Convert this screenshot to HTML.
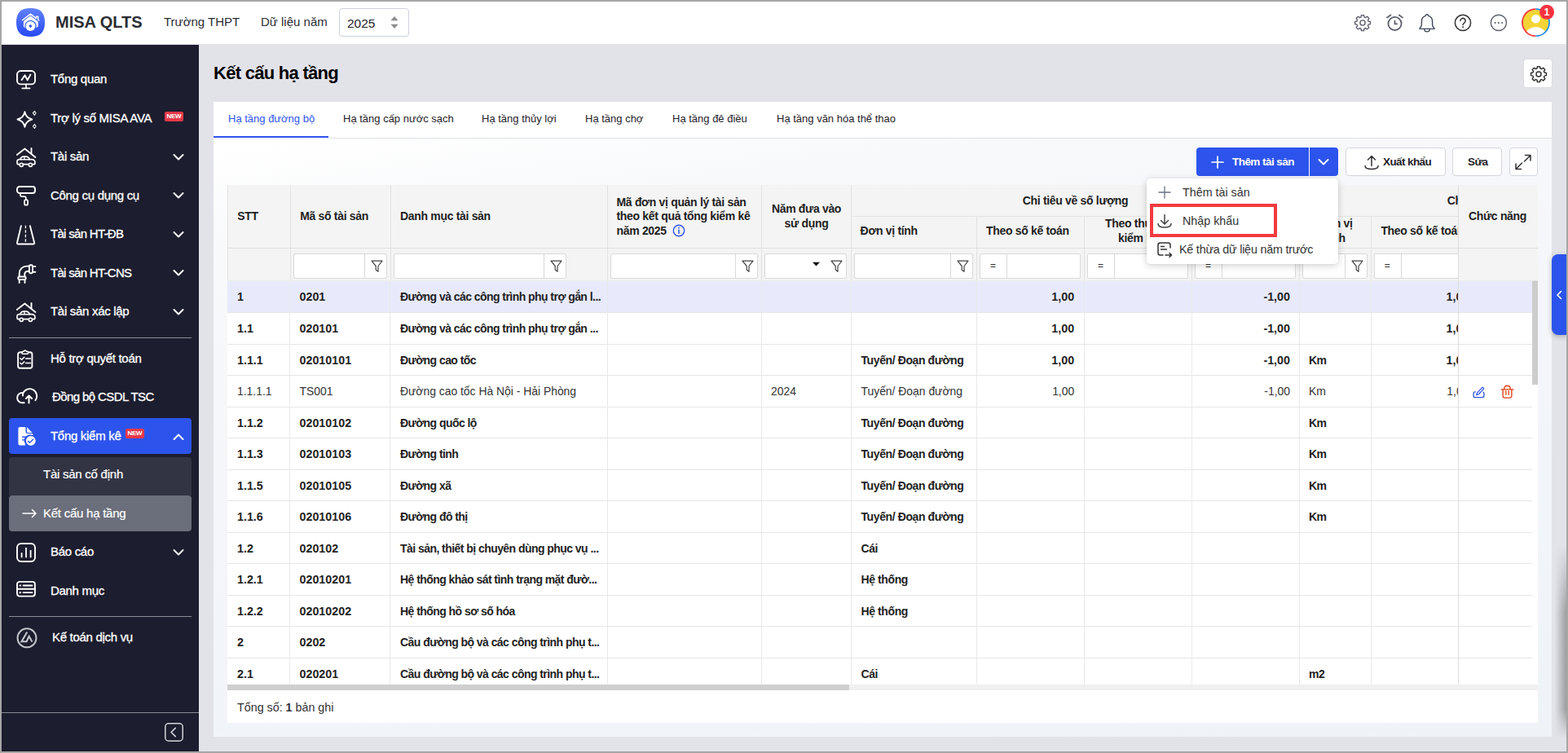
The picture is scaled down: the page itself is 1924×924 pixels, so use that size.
<!DOCTYPE html>
<html lang="vi">
<head>
<meta charset="utf-8">
<title>MISA QLTS - Kết cấu hạ tầng</title>
<style>
*{box-sizing:border-box;margin:0;padding:0}
html,body{width:1924px;height:924px;overflow:hidden}
body{background:#a6a6a6;font-family:"Liberation Sans",sans-serif;color:#1f2229;position:relative}
#app{position:absolute;left:2px;top:2px;width:1920px;height:920px;background:#e2e3e9;overflow:hidden}
/* header */
#hdr{position:absolute;left:0;top:0;width:1920px;height:52px;background:#fff}
#hdr .brand{position:absolute;left:66px;top:13px;font-size:20px;font-weight:700;color:#2b2d33;line-height:24px;white-space:nowrap}
#hdr .t{position:absolute;top:15px;font-size:15px;line-height:20px;color:#2b2d33;white-space:nowrap}
#year{position:absolute;left:414px;top:8px;width:86px;height:35px;border:1px solid #ced2dc;border-radius:4px;background:#fff}
#year span{position:absolute;left:9px;top:8px;font-size:15.500px;line-height:20px;color:#1f2229}
#hdr svg{position:absolute}
/* sidebar */
#side{position:absolute;left:0;top:53px;width:242px;height:867px;background:#1c1d2e}
.mi{position:absolute;left:0;width:242px;height:44px}
.mi .tx{position:absolute;left:60px;top:12.800px;font-size:15px;line-height:20px;color:#fff;white-space:nowrap;letter-spacing:-0.300px;-webkit-text-stroke:0.300px #fff}
.mi svg.ic{position:absolute;left:18px;top:10px;width:24px;height:24px;overflow:visible}
.mi svg.chev{position:absolute;left:210px;top:18px;width:14px;height:10px}
.sep{position:absolute;left:9px;width:224px;height:1px;background:#8a8c98}
.new{position:absolute;background:#e8394a;color:#fff;font-size:8px;font-weight:700;border-radius:2px;line-height:12px;height:12px;text-align:center;letter-spacing:-0.300px}
.mi.act{left:9px;width:224px;background:#2c54ec;border-radius:4px}
.mi.act svg.ic{left:9px}
.mi.act .tx{left:51px}
.mi.act svg.chev{left:201px}
.sub{position:absolute;left:9px;width:224px;height:44px;background:#323444;border-radius:4px}
.sub.on{background:#6b6e7b}
.sub span{position:absolute;left:42px;top:12px;font-size:15px;line-height:20px;color:#fff;white-space:nowrap;letter-spacing:-0.250px;-webkit-text-stroke:0.200px #fff}
#collapse{position:absolute;left:200px;top:832px;width:23px;height:23px}
#collapse svg{width:23px;height:23px}
/* main */
#title{position:absolute;left:260px;top:72.600px;font-size:22px;font-weight:700;line-height:30px;color:#000;white-space:nowrap;letter-spacing:-0.720px}
#gear{position:absolute;left:1867px;top:70px;width:36px;height:36px;background:#fff;border-radius:4px;border:1px solid #dcdde2}
#card{position:absolute;left:260px;top:123px;width:1642px;height:779px;background:linear-gradient(172deg,#fff 6%,#f8f9fb 18%,#f4f6fa 45%,#eff3f7 100%)}
#tabs{position:absolute;left:0;top:0;width:1642px;height:45px;background:#fff}
#tabs:after{content:"";position:absolute;left:141px;top:44px;width:1501px;height:1px;background:#dfe1e6}
.tab{position:absolute;top:12px;font-size:13px;line-height:18px;color:#1f2229;white-space:nowrap}
.tab.on{color:#2f54eb}
#tabline{position:absolute;left:0;top:42px;width:141px;height:2px;background:#2f54eb}
/* toolbar */
.btn{position:absolute;top:179px;height:35px;border:1px solid #d3d6de;border-radius:4px;background:#fff;font-size:13.500px;color:#1f2229;white-space:nowrap}
.btn span{position:absolute;top:8px;line-height:18px;font-weight:700;letter-spacing:-0.600px}
/* grid */
#grid{position:absolute;left:277px;top:225px;width:1608px;height:660px;background:#fff;overflow:hidden}
#ghead{position:absolute;left:0;top:0;width:1608px;height:118px;background:#f4f4f4}
.vl{position:absolute;width:1px;background:#e2e2e2}
.vl.bl{background:#e9e9e9}
.hl{position:absolute;height:1px;background:#e4e4e4}
.th{position:absolute;font-size:14px;letter-spacing:-0.320px;font-weight:700;line-height:17.500px;color:#1f1f1f;white-space:nowrap}
.fi{position:absolute;top:84px;height:31px;background:#fff;border:1px solid #d9d9d9;border-radius:2px}
.fi i{position:absolute;top:0;width:1px;height:29px;background:#d9d9d9}
.fi svg{position:absolute}
.fi svg.fn{right:4px;top:7px;width:15px;height:16px}
.fi b{position:absolute;top:6px;font-size:12px;font-weight:400;color:#333;line-height:16px}
.row{position:absolute;left:0;width:1608px;height:39px}
.c{position:absolute;top:0;height:38px;line-height:38px;font-size:14.300px;font-weight:700;color:#1f1f1f;white-space:nowrap}
.c.t{font-size:14px;letter-spacing:-0.550px}
.c.u{letter-spacing:-0.400px}
.r .c{font-weight:400;color:#333;font-size:13.900px;letter-spacing:0}
.c.n{text-align:right}

#addbtn{position:absolute;left:1466px;top:179px;width:174px;height:35px;background:#2c54ec;border-radius:4px;color:#fff;letter-spacing:-0.550px;font-size:13.500px;font-weight:700;white-space:nowrap}
#addbtn svg{position:absolute}
#addbtn span{position:absolute;top:8.700px;line-height:18px}
#addbtn i{position:absolute;left:138px;top:0;width:1px;height:35px;background:#fff}
.row{border-top:1px solid #e6e6e6}
.row.sel{border-top-color:#ebebeb}
.row.sel{background:#e8eafc}
#fix{position:absolute;top:0;width:98px;height:614px;background:#fff;border-left:1px solid #dcdcdc}
#fix .fh{position:absolute;left:0;top:0;width:98px;height:118px;background:#f4f4f4;border-bottom:1px solid #e2e2e2}
#fix .fh:after{content:"";position:absolute;left:0;top:77px;width:98px;height:1px;background:#dedede}
#fix .fr{position:absolute;left:0;width:90px;height:39px;border-top:1px solid #e6e6e6}
#fix .fr.sel{background:#e8eafc;border-top-color:#ebebeb}
#vthumb{position:absolute;width:7px;height:127px;background:#cdcdcd}
#hs{position:absolute;left:0;top:613px;width:1608px;height:7px;background:#f0f0f0}
#hs div{position:absolute;left:0;top:0;width:763px;height:7px;background:#cfcfcf}
#foot{position:absolute;left:12px;top:631px;font-size:14.300px;line-height:20px;color:#333;white-space:nowrap}
#dd{position:absolute;left:1405px;top:217px;width:235px;height:105px;background:#fff;border-radius:5px;box-shadow:0 2px 10px rgba(0,0,0,.18),0 0 2px rgba(0,0,0,.08)}
#dd svg{position:absolute}
#dd span{position:absolute;font-size:14.300px;line-height:20px;color:#333;white-space:nowrap}
#red{position:absolute;left:4px;top:31px;width:156px;height:41px;border:4px solid #f23b40}
#stab{position:absolute;left:1902px;top:310px;width:18px;height:99px;background:#2c54ec;border-radius:8px 0 0 8px;box-shadow:0 2px 6px rgba(0,0,0,.25)}
#rshadow{position:absolute;left:1906px;top:668px;width:14px;height:236px;background:linear-gradient(90deg,rgba(120,120,120,0),rgba(120,120,120,.65));-webkit-mask-image:linear-gradient(180deg,transparent,#000 35%,#000 85%,transparent);mask-image:linear-gradient(180deg,transparent,#000 35%,#000 85%,transparent)}
</style>
</head>
<body>
<div id="app">
<div id="hdr">
  <svg style="left:18px;top:8px;width:35px;height:35px" viewBox="0 0 35 35">
    <defs><linearGradient id="lg" x1="0" y1="0" x2="0" y2="1"><stop offset="0" stop-color="#6181ff"/><stop offset="1" stop-color="#2749f3"/></linearGradient></defs>
    <path d="M17.500 0C29.500 0 35 5.500 35 17.500S29.500 35 17.500 35 0 29.500 0 17.500 5.500 0 17.500 0z" fill="url(#lg)"/>
    <path d="M7.400 14.700L17.400 7.100l7.200 5.500v-2.300h2.100v3.900l1.100.8" stroke="#fff" stroke-width="1.400" fill="none" stroke-linejoin="round" stroke-linecap="round"/>
    <path d="M8.900 15.800L17.400 9.300l9.300 7.100v6.300l-2.300 1.400a7.200 7.200 0 1 0-13.600 .5L8.900 22.800z" fill="#fff"/>
    <circle cx="17.400" cy="22" r="6" fill="#fff"/>
    <path d="M17.400 19.800l2.100 2.200-2.100 2.200-2.100-2.200z" fill="#3355f6"/>
  </svg>
  <div class="brand">MISA QLTS</div>
  <div class="t" style="left:199px">Trường THPT</div>
  <div class="t" style="left:318px">Dữ liệu năm</div>
  <div id="year"><span>2025</span>
    <svg style="left:62px;top:9.300px;width:10px;height:15px" viewBox="0 0 10 15"><path d="M5 0l4.600 5.200H.4zM5 15L.4 9.800h9.200z" fill="#8e8e8e"/></svg>
  </div>
  <!-- gear -->
  <svg style="left:1659px;top:15px;width:22px;height:22px" viewBox="0 0 24 24"><g fill="none" stroke="#5a5f6b" stroke-width="1.500" stroke-linejoin="round"><circle cx="12" cy="12" r="3.400"/><path d="M10.300 1.800h3.400l.5 2.600 1.700.7 2.200-1.500 2.400 2.400-1.500 2.200.7 1.700 2.600.5v3.400l-2.600.5-.7 1.700 1.500 2.200-2.400 2.400-2.200-1.500-1.700.7-.5 2.600h-3.400l-.5-2.600-1.700-.7-2.200 1.500-2.400-2.400 1.500-2.200-.7-1.700-2.600-.5v-3.400l2.600-.5.7-1.700-1.500-2.200 2.400-2.400 2.200 1.500 1.700-.7z"/></g></svg>
  <!-- clock -->
  <svg style="left:1697px;top:14px;width:25px;height:24px" viewBox="0 0 25 24"><g fill="none" stroke="#5a5f6b" stroke-width="1.800" stroke-linecap="round"><circle cx="12.500" cy="13" r="8.100"/><path d="M12.500 9.600v3.700h2.700M3 5.600l4.400-3.100M17.900 2.500l4 3.100"/></g></svg>
  <!-- bell -->
  <svg style="left:1737px;top:13px;width:24px;height:25px" viewBox="0 0 24 25"><g fill="none" stroke="#3d4657" stroke-width="1.400" stroke-linejoin="round" stroke-linecap="round"><path d="M12 2.800c1 0 1.600.7 1.800 1.600 3 1 4.800 3.600 4.800 7v3.500c0 2 .9 3.600 2.300 4.600v.9H3.100v-.9c1.400-1 2.300-2.600 2.300-4.600v-3.500c0-3.400 1.800-6 4.800-7 .2-.9.800-1.600 1.800-1.600z"/><path d="M8.700 20.600a3.300 3.300 0 0 0 6.600 0"/></g></svg>
  <!-- help -->
  <svg style="left:1781px;top:14px;width:24px;height:24px" viewBox="0 0 24 24"><circle cx="12" cy="11.900" r="9.600" fill="none" stroke="#333" stroke-width="1.500"/><path d="M8.900 9.500a3.100 3.100 0 1 1 4.800 2.600c-1 .7-1.600 1.300-1.600 2.500" fill="none" stroke="#333" stroke-width="1.500" stroke-linecap="round"/><circle cx="12.100" cy="17.300" r="1" fill="#333"/></svg>
  <!-- more -->
  <svg style="left:1825px;top:14px;width:24px;height:24px" viewBox="0 0 24 24"><circle cx="11.900" cy="11.900" r="9.600" fill="none" stroke="#5f6570" stroke-width="1.400"/><circle cx="7.600" cy="12" r="1.100" fill="#5f6570"/><circle cx="11.900" cy="12" r="1.100" fill="#5f6570"/><circle cx="16.200" cy="12" r="1.100" fill="#5f6570"/></svg>
  <!-- avatar -->
  <svg style="left:1864px;top:3px;width:46px;height:42px" viewBox="0 0 46 42">
    <defs><clipPath id="av"><circle cx="18.500" cy="22.600" r="15.600"/></clipPath></defs>
    <path d="M18.500 5.200a17.400 17.400 0 0 0 0 34.800z" fill="#f5333f"/>
    <path d="M18.500 5.200a17.400 17.400 0 0 1 0 34.800z" fill="#1a8cff"/>
    <circle cx="18.500" cy="22.600" r="15.700" fill="#f4d535"/>
    <g clip-path="url(#av)" fill="#fff"><circle cx="18.500" cy="18.200" r="5.400"/><ellipse cx="18.500" cy="38" rx="12.500" ry="10"/></g>
    <circle cx="32.100" cy="9.800" r="9" fill="#f5333f"/>
    <text x="32.100" y="14.300" text-anchor="middle" font-family="Liberation Sans, sans-serif" font-size="12.500" font-weight="700" fill="#fff">1</text>
  </svg>
</div>
<div id="side">
<div class="mi" style="top:19px"><svg class="ic" viewBox="0 0 24 26" style="height:26px"><g stroke="#fff" stroke-width="1.9" fill="none" stroke-linecap="round" stroke-linejoin="round"><rect x="1" y="3" width="22" height="16.4" rx="4.5"/><path d="M12 19.6V24M7.2 24.3h9.4" stroke-width="1.7"/><path d="M6.6 14.1l3.9-5.8 3.2 6 3.7-6.7"/></g></svg><span class="tx">Tổng quan</span></div>
<div class="mi" style="top:67px"><svg class="ic" viewBox="0 0 26 24" style="width:26px;top:12px"><g stroke="#fff" stroke-width="1.9" fill="none" stroke-linecap="round" stroke-linejoin="round" stroke-width="1.7"><path d="M10.4 3.2c1 5.2 3.6 7.9 8.9 9.3-5.3 1.400-7.900 4.100-8.900 9.300-1-5.200-3.600-7.900-8.900-9.300 5.300-1.400 7.900-4.100 8.900-9.300z"/><path d="M22.400 2.300l1.700 2.400-1.700 2.600-2-2.600zM22.400 18.500l1.700 2.500-1.700 2.500-2-2.500z" stroke-width="1.100"/></g></svg><span class="tx">Trợ lý số MISA AVA</span><span class="new" style="left:200px;top:15px;width:23px">NEW</span></div>
<div class="mi" style="top:114.5px"><svg class="ic" viewBox="0 0 24 26" style="height:26px"><g stroke="#fff" stroke-width="1.9" fill="none" stroke-linecap="round" stroke-linejoin="round" stroke-width="1.8"><path d="M0.800 10l9.600-7.600 13 10.500M18.500 2v6.300"/><path d="M4.300 21.700H3a2 2 0 0 1-2-2v-1.500a2.500 2.500 0 0 1 2.500-2.500h1.300c.7-2.300 2.300-3.600 4.500-3.600h2.600c2 0 3.600 1.300 4.600 3.600h2.500c2.300 0 4 1.600 4 3.600v.4a2 2 0 0 1-2 2h-1.300M8.400 21.700h6.400" stroke-width="1.700"/><path d="M5.300 15.700h11M10 12.400v3.300" stroke-width="1.400"/><circle cx="6.300" cy="22.300" r="2.100" stroke-width="1.600"/><circle cx="17.400" cy="22.300" r="2.100" stroke-width="1.600"/></g></svg><span class="tx">Tài sản</span><svg class="chev" viewBox="0 0 14 10"><path d="M1.500 2l5.500 5.500L12.500 2" stroke="#fff" stroke-width="2" fill="none" stroke-linecap="round" stroke-linejoin="round"/></svg></div>
<div class="mi" style="top:162px"><svg class="ic" viewBox="0 0 24 26" style="height:26px"><g stroke="#fff" stroke-width="1.9" fill="none" stroke-linecap="round" stroke-linejoin="round" stroke-width="2"><rect x="1" y="2" width="22" height="8" rx="3"/><path d="M5 10.500v1.800a1.800 1.800 0 0 0 1.800 1.800h3a2 2 0 0 1 2 2v2" stroke-width="1.700"/><rect x="10" y="18.200" width="4.100" height="6.500" rx="2" stroke-width="1.800"/></g></svg><span class="tx">Công cụ dụng cụ</span><svg class="chev" viewBox="0 0 14 10"><path d="M1.500 2l5.500 5.500L12.500 2" stroke="#fff" stroke-width="2" fill="none" stroke-linecap="round" stroke-linejoin="round"/></svg></div>
<div class="mi" style="top:209.5px"><svg class="ic" viewBox="0 0 24 26" style="height:26px"><g stroke="#fff" stroke-width="1.9" fill="none" stroke-linecap="round" stroke-linejoin="round" stroke-width="1.700"><path d="M5.900 2.200L1 22.800a1.300 1.300 0 0 0 1.300 1.700h18.500a1.300 1.300 0 0 0 1.300-1.700L16.900 2.200"/><path d="M11.400 1.800v20" stroke-dasharray="3.500 2" stroke-width="1.300" stroke-linecap="butt"/></g></svg><span class="tx" style="letter-spacing:-0.700px">Tài sản HT-ĐB</span><svg class="chev" viewBox="0 0 14 10"><path d="M1.500 2l5.500 5.500L12.500 2" stroke="#fff" stroke-width="2" fill="none" stroke-linecap="round" stroke-linejoin="round"/></svg></div>
<div class="mi" style="top:257px"><svg class="ic" viewBox="0 0 24 26" style="height:26px"><g stroke="#fff" stroke-width="1.9" fill="none" stroke-linecap="round" stroke-linejoin="round" stroke-width="1.500"><path d="M3.700 17.400v-3.800a9 9 0 0 1 9-9h3M10.300 17.400v-3.200a3.200 3.200 0 0 1 3.200-3.200h2.200"/><rect x="15.900" y="3.300" width="4.100" height="10" rx="1.500"/><path d="M20 5h3.300M20 11.700h3.300"/><rect x="2.200" y="17.500" width="9.500" height="3.500" rx="1.500"/><path d="M3.700 21v4M10.500 21v4"/></g></svg><span class="tx" style="letter-spacing:-0.700px">Tài sản HT-CNS</span><svg class="chev" viewBox="0 0 14 10"><path d="M1.500 2l5.500 5.500L12.500 2" stroke="#fff" stroke-width="2" fill="none" stroke-linecap="round" stroke-linejoin="round"/></svg></div>
<div class="mi" style="top:304.5px"><svg class="ic" viewBox="0 0 24 26" style="height:26px"><g stroke="#fff" stroke-width="1.9" fill="none" stroke-linecap="round" stroke-linejoin="round" stroke-width="1.8"><path d="M0.800 10l9.600-7.600 13 10.500M18.500 2v6.300"/><path d="M4.300 21.700H3a2 2 0 0 1-2-2v-1.500a2.500 2.500 0 0 1 2.500-2.500h1.300c.7-2.300 2.300-3.600 4.500-3.600h2.600c2 0 3.600 1.300 4.600 3.600h2.500c2.300 0 4 1.600 4 3.600v.4a2 2 0 0 1-2 2h-1.300M8.400 21.700h6.400" stroke-width="1.700"/><path d="M5.300 15.700h11M10 12.400v3.300" stroke-width="1.400"/><circle cx="6.300" cy="22.300" r="2.100" stroke-width="1.600"/><circle cx="17.400" cy="22.300" r="2.100" stroke-width="1.600"/></g></svg><span class="tx">Tài sản xác lập</span><svg class="chev" viewBox="0 0 14 10"><path d="M1.500 2l5.500 5.500L12.500 2" stroke="#fff" stroke-width="2" fill="none" stroke-linecap="round" stroke-linejoin="round"/></svg></div>
<div class="mi" style="top:362.5px"><svg class="ic" viewBox="0 0 24 26" style="height:26px"><g stroke="#fff" stroke-width="1.9" fill="none" stroke-linecap="round" stroke-linejoin="round" stroke-width="1.800"><path d="M7 4.300H4.600a2.500 2.500 0 0 0-2.500 2.500v14.400a2.500 2.500 0 0 0 2.500 2.500h12.300a2.500 2.500 0 0 0 2.500-2.500V6.800a2.500 2.500 0 0 0-2.500-2.500h-2.200"/><path d="M8.300 6.300h5a1.500 1.500 0 0 0 0-3h-.9a1.800 1.800 0 0 0-3.400 0h-.7a1.500 1.500 0 0 0 0 3z" stroke-width="1.600"/><path d="M4.800 11.700l1.800 1.700 3.200-3.100M11.600 12h5.800M4.800 17.300l1.800 1.700 3.200-3.100M11.600 17.600h5.800" stroke-width="1.500"/></g></svg><span class="tx">Hỗ trợ quyết toán</span></div>
<div class="mi" style="top:410px"><svg class="ic" viewBox="0 0 26 24" style="width:26px"><g stroke="#fff" stroke-width="1.9" fill="none" stroke-linecap="round" stroke-linejoin="round" stroke-width="1.800"><path d="M9.700 19.300H7.300A6.200 6.200 0 0 1 7.300 6.900c.3 0 .5 0 .7.100v3.500"/><path d="M8 8.300A8.800 8.800 0 1 1 23.400 16.300"/><path d="M15.500 19.600v-8.800M12 14l3.500-3.500 3.600 3.500" stroke-width="2"/></g></svg><span class="tx" style="left:62px;top:12px;letter-spacing:-0.600px">Đồng bộ CSDL TSC</span></div>
<div class="mi act" style="top:457.5px"><svg class="ic" viewBox="0 0 26 26" style="width:26px;height:26px;top:9.300px"><path d="M4.600 1.900h6.300a.6.600 0 0 1 .6.600v5.200a2.300 2.300 0 0 0 2.300 2.300h5.900a.6.600 0 0 1 .6.600v1.600a7.200 7.200 0 0 0-9.300 10.500v1.700H4.600a2.200 2.200 0 0 1-2.200-2.200V4.100a2.200 2.200 0 0 1 2.200-2.200z" fill="#fff"/><path d="M13 2.300l6.700 6.600h-5.400A1.300 1.300 0 0 1 13 7.600z" fill="#fff"/><path d="M7 14.200h6M7 17.900h4.500" stroke="#2c54ec" stroke-width="1.400"/><circle cx="17.800" cy="18.800" r="5.900" fill="#fff"/><path d="M14 18.900l2.400 2.400 4.600-4.500" stroke="#2c54ec" stroke-width="1.400" fill="none"/></svg><span class="tx">Tổng kiểm kê</span><span class="new" style="left:143px;top:13px;width:23px">NEW</span><svg class="chev" viewBox="0 0 14 10"><path d="M1.500 8l5.500-5.500L12.500 8" stroke="#fff" stroke-width="2" fill="none" stroke-linecap="round" stroke-linejoin="round"/></svg></div>
<div class="mi" style="top:600px"><svg class="ic" viewBox="0 0 24 24" style="top:11px"><g stroke="#fff" stroke-width="1.9" fill="none" stroke-linecap="round" stroke-linejoin="round" stroke-width="2"><rect x="1" y="1" width="22" height="22" rx="5"/><path d="M6.600 12.300v6M12 5.900v12.400M17.600 8.900v9.400" stroke-width="1.8" stroke-linecap="butt"/></g></svg><span class="tx" style="top:11.700px">Báo cáo</span><svg class="chev" viewBox="0 0 14 10"><path d="M1.500 2l5.500 5.500L12.500 2" stroke="#fff" stroke-width="2" fill="none" stroke-linecap="round" stroke-linejoin="round"/></svg></div>
<div class="mi" style="top:647.5px"><svg class="ic" viewBox="0 0 24 24" style="top:9px"><g stroke="#fff" stroke-width="1.9" fill="none" stroke-linecap="round" stroke-linejoin="round" stroke-width="2"><rect x="1" y="1.900" width="21.900" height="17.700" rx="3"/><path d="M1 10.800h21.900"/><path d="M8.500 6.500h11M8.500 15.200h11" stroke-width="1.800"/><path d="M4.600 6.500h.4M4.600 15.200h.4" stroke-width="2.200"/></g></svg><span class="tx" style="top:12.400px">Danh mục</span></div>
<div class="mi" style="top:705px"><svg class="ic" viewBox="0 0 26 26" style="width:26px;height:26px"><g stroke="#c3c4cb" fill="none" stroke-width="2"><circle cx="13" cy="12.800" r="11.500"/><path d="M13.300 5.500L6.500 17.200h6.100l3-6.500 3.900 6.900" stroke-width="2.1"/></g></svg><span class="tx" style="left:62px;top:11.500px">Kế toán dịch vụ</span></div>
<div class="sep" style="top:359px"></div>
<div class="sep" style="top:701px"></div>
<div class="sub" style="top:506px;height:47px;border-radius:4px 4px 0 0"><span style="top:11px">Tài sản cố định</span></div>
<div class="sub on" style="top:553px"><svg viewBox="0 0 20 12" style="position:absolute;left:16px;top:16px;width:20px;height:12px"><path d="M1 6h16M12.500 1.500L17 6l-4.500 4.500" stroke="#fff" stroke-width="1.500" fill="none" stroke-linecap="round" stroke-linejoin="round"/></svg><span>Kết cấu hạ tầng</span></div>
<div class="sep" style="left:0;width:242px;top:819px"></div>
<div id="collapse"><svg viewBox="0 0 20 20"><rect x="0.700" y="0.700" width="18.600" height="18.600" rx="3.500" stroke="#d5d6dc" stroke-width="1.300" fill="none"/><path d="M11.500 5.500L7 10l4.500 4.500" stroke="#d5d6dc" stroke-width="1.400" fill="none" stroke-linecap="round" stroke-linejoin="round"/></svg></div>
</div>
<div id="title">Kết cấu hạ tầng</div>
<div id="gear"><svg viewBox="0 0 24 24" style="position:absolute;left:6.500px;top:6.500px;width:22px;height:22px"><g fill="none" stroke="#333" stroke-width="1.600" stroke-linejoin="round"><circle cx="12" cy="12" r="3.300"/><path d="M10.300 1.800h3.400l.5 2.600 1.700.7 2.200-1.500 2.400 2.400-1.500 2.200.7 1.700 2.600.5v3.400l-2.600.5-.7 1.700 1.500 2.200-2.400 2.400-2.200-1.500-1.700.7-.5 2.600h-3.400l-.5-2.600-1.700-.7-2.200 1.500-2.400-2.400 1.500-2.200-.7-1.700-2.600-.5v-3.400l2.600-.5.7-1.700-1.500-2.200 2.400-2.400 2.200 1.500 1.700-.7z"/></g></svg></div>
<div id="card"><div id="tabs">
<div class="tab on" style="left:18px">Hạ tầng đường bộ</div>
<div class="tab" style="left:159px">Hạ tầng cấp nước sạch</div>
<div class="tab" style="left:329px">Hạ tầng thủy lợi</div>
<div class="tab" style="left:456px">Hạ tầng chợ</div>
<div class="tab" style="left:563px">Hạ tầng đê điều</div>
<div class="tab" style="left:691px">Hạ tầng văn hóa thể thao</div>
<div id="tabline"></div></div></div>
<div id="addbtn"><svg viewBox="0 0 16 16" style="left:18px;top:10px;width:16px;height:16px"><path d="M8 1v14M1 8h14" stroke="#fff" stroke-width="1.700" stroke-linecap="round"/></svg><span style="left:44px">Thêm tài sản</span><i></i><svg viewBox="0 0 14 10" style="left:149px;top:13px;width:14px;height:10px"><path d="M1.500 2l5.500 5.500L12.500 2" stroke="#fff" stroke-width="2" fill="none" stroke-linecap="round" stroke-linejoin="round"/></svg></div>
<div class="btn" style="left:1649px;width:123px"><svg viewBox="0 0 20 20" style="position:absolute;left:21px;top:7px;width:20px;height:20px"><path d="M10 14.500V3M5.500 7L10 2.500 14.500 7M2 14.500c0 2.500 3 4 8 4s8-1.500 8-4" stroke="#333" stroke-width="1.500" fill="none" stroke-linecap="round" stroke-linejoin="round"/></svg><span style="left:45px">Xuất khẩu</span></div>
<div class="btn" style="left:1780px;width:61px"><span style="left:18px">Sửa</span></div>
<div class="btn" style="left:1850px;width:35px"><svg viewBox="0 0 22 22" style="position:absolute;left:5px;top:6px;width:22px;height:22px"><path d="M13.500 2.500H20V9M20 2.500L12.500 10M8.500 19.500H2V13M2 19.500L9.500 12" stroke="#333" stroke-width="1.500" fill="none" stroke-linecap="round" stroke-linejoin="round"/></svg></div>
<div id="grid">
<div id="ghead"></div>
<div class="vl" style="left:0;top:0;height:118px"></div>
<div class="vl" style="left:77px;top:0px;height:118px"></div>
<div class="vl" style="left:200px;top:0px;height:118px"></div>
<div class="vl" style="left:466px;top:0px;height:118px"></div>
<div class="vl" style="left:655px;top:0px;height:118px"></div>
<div class="vl" style="left:765px;top:0px;height:118px"></div>
<div class="vl" style="left:919px;top:39px;height:79px"></div>
<div class="vl" style="left:1051px;top:39px;height:79px"></div>
<div class="vl" style="left:1183px;top:39px;height:79px"></div>
<div class="vl" style="left:1315px;top:0px;height:118px"></div>
<div class="vl" style="left:1403px;top:39px;height:79px"></div>
<div class="hl" style="left:765px;top:38px;width:550px"></div>
<div class="hl" style="left:1315px;top:38px;width:300px"></div>
<div class="hl" style="left:0;top:77px;width:1608px;background:#dedede"></div>
<div class="hl" style="left:0;top:117px;width:1608px;background:#e2e2e2"></div>
<div class="th" style="left:12.2px;top:29.9px">STT</div>
<div class="th" style="left:89.2px;top:29.9px">Mã số tài sản</div>
<div class="th" style="left:212px;top:29.9px">Danh mục tài sản</div>
<div class="th" style="left:477.5px;top:12.8px">Mã đơn vị quản lý tài sản</div>
<div class="th" style="left:477.5px;top:30.2px">theo kết quả tổng kiểm kê</div>
<div class="th" style="left:477.5px;top:47.6px">năm 2025</div>
<svg viewBox="0 0 16 16" style="position:absolute;left:546px;top:48px;width:16px;height:16px"><circle cx="8" cy="8" r="6.700" fill="none" stroke="#2f54eb" stroke-width="1.400"/><path d="M8 7.200v4.300" stroke="#2f54eb" stroke-width="1.500" stroke-linecap="round"/><circle cx="8" cy="4.700" r=".9" fill="#2f54eb"/></svg>
<div class="th" style="left:655.6px;width:109.8px;text-align:center;top:20.8px">Năm đưa vào</div>
<div class="th" style="left:655.6px;width:109.8px;text-align:center;top:39.0px">sử dụng</div>
<div class="th" style="left:765.4px;width:550.3px;text-align:center;top:10.6px">Chỉ tiêu về số lượng</div>
<div class="th" style="left:776.6px;top:47.6px">Đơn vị tính</div>
<div class="th" style="left:931px;top:47.6px">Theo số kế toán</div>
<div class="th" style="left:1051.5px;width:132.2px;text-align:center;top:38.6px">Theo thực tế</div>
<div class="th" style="left:1051.5px;width:132.2px;text-align:center;top:56.6px">kiểm kê</div>
<div class="th" style="left:1183.7px;width:132.0px;text-align:center;top:47.6px">Chênh lệch</div>
<div class="th" style="left:1315.7px;width:87.7px;text-align:center;top:38.6px">Đơn vị</div>
<div class="th" style="left:1315.7px;width:87.7px;text-align:center;top:56.6px">tính</div>
<div class="th" style="left:1496.8px;top:11.0px">Chỉ tiêu về nguyên giá</div>
<div class="th" style="left:1415.4px;top:48.2px">Theo số kế toán</div>
<div class="fi" style="left:81.4px;width:115.1px"><i style="right:26px"></i><svg class="fn" viewBox="0 0 15 16"><path d="M1 1.200h13l-5 6.300v6.800L6.200 12V7.500z" fill="none" stroke="#444" stroke-width="1.200" stroke-linejoin="round"/></svg></div>
<div class="fi" style="left:204px;width:212px"><i style="right:26px"></i><svg class="fn" viewBox="0 0 15 16"><path d="M1 1.200h13l-5 6.300v6.800L6.200 12V7.500z" fill="none" stroke="#444" stroke-width="1.200" stroke-linejoin="round"/></svg></div>
<div class="fi" style="left:470.2px;width:180.6px"><i style="right:26px"></i><svg class="fn" viewBox="0 0 15 16"><path d="M1 1.200h13l-5 6.300v6.800L6.200 12V7.500z" fill="none" stroke="#444" stroke-width="1.200" stroke-linejoin="round"/></svg></div>
<div class="fi" style="left:659.3px;width:101px"><svg viewBox="0 0 10 6" style="left:58px;top:9px;width:9px;height:6px"><path d="M0 .5h10L5 5.800z" fill="#111"/></svg><svg class="fn" viewBox="0 0 15 16"><path d="M1 1.200h13l-5 6.300v6.800L6.200 12V7.500z" fill="none" stroke="#444" stroke-width="1.200" stroke-linejoin="round"/></svg></div>
<div class="fi" style="left:768.9px;width:145.9px"><i style="right:26px"></i><svg class="fn" viewBox="0 0 15 16"><path d="M1 1.200h13l-5 6.300v6.800L6.200 12V7.500z" fill="none" stroke="#444" stroke-width="1.200" stroke-linejoin="round"/></svg></div>
<div class="fi" style="left:923.0px;width:124.0px"><b style="left:12px">=</b><i style="left:32px"></i></div>
<div class="fi" style="left:1054.9px;width:124.3px"><b style="left:12px">=</b><i style="left:32px"></i></div>
<div class="fi" style="left:1187.1px;width:124.1px"><b style="left:12px">=</b><i style="left:32px"></i></div>
<div class="fi" style="left:1319.2px;width:79.4px"><i style="right:26px"></i><svg class="fn" viewBox="0 0 15 16"><path d="M1 1.200h13l-5 6.300v6.800L6.200 12V7.500z" fill="none" stroke="#444" stroke-width="1.200" stroke-linejoin="round"/></svg></div>
<div class="fi" style="left:1406.8px;width:124.1px"><b style="left:12px">=</b><i style="left:32px"></i></div>
<div class="row sel" style="top:117px">
<span class="c" style="left:12px">1</span>
<span class="c" style="left:88.5px">0201</span>
<span class="c t" style="left:212px">Đường và các công trình phụ trợ gắn l...</span>
<span class="c n" style="left:939.2px;width:100px">1,00</span>
<span class="c n" style="left:1204px;width:100px">-1,00</span>
<span class="c n" style="left:1423.4px;width:100px">1,00</span>
</div>
<div class="row" style="top:156.0px">
<span class="c" style="left:12px">1.1</span>
<span class="c" style="left:88.5px">020101</span>
<span class="c t" style="left:212px">Đường và các công trình phụ trợ gắn ...</span>
<span class="c n" style="left:939.2px;width:100px">1,00</span>
<span class="c n" style="left:1204px;width:100px">-1,00</span>
<span class="c n" style="left:1423.4px;width:100px">1,00</span>
</div>
<div class="row" style="top:194.5px">
<span class="c" style="left:12px">1.1.1</span>
<span class="c" style="left:88.5px">02010101</span>
<span class="c t" style="left:212px">Đường cao tốc</span>
<span class="c t u" style="left:777.5px">Tuyến/ Đoạn đường</span>
<span class="c n" style="left:939.2px;width:100px">1,00</span>
<span class="c n" style="left:1204px;width:100px">-1,00</span>
<span class="c t" style="left:1327px">Km</span>
<span class="c n" style="left:1423.4px;width:100px">1,00</span>
</div>
<div class="row r" style="top:233.0px">
<span class="c" style="left:12px">1.1.1.1</span>
<span class="c" style="left:88.5px">TS001</span>
<span class="c t" style="left:212px">Đường cao tốc Hà Nội - Hải Phòng</span>
<span class="c" style="left:667px">2024</span>
<span class="c t u" style="left:777.5px">Tuyến/ Đoạn đường</span>
<span class="c n" style="left:939.2px;width:100px">1,00</span>
<span class="c n" style="left:1204px;width:100px">-1,00</span>
<span class="c t" style="left:1327px">Km</span>
<span class="c n" style="left:1423.4px;width:100px">1,00</span>
</div>
<div class="row" style="top:271.5px">
<span class="c" style="left:12px">1.1.2</span>
<span class="c" style="left:88.5px">02010102</span>
<span class="c t" style="left:212px">Đường quốc lộ</span>
<span class="c t u" style="left:777.5px">Tuyến/ Đoạn đường</span>
<span class="c t" style="left:1327px">Km</span>
</div>
<div class="row" style="top:310.0px">
<span class="c" style="left:12px">1.1.3</span>
<span class="c" style="left:88.5px">02010103</span>
<span class="c t" style="left:212px">Đường tỉnh</span>
<span class="c t u" style="left:777.5px">Tuyến/ Đoạn đường</span>
<span class="c t" style="left:1327px">Km</span>
</div>
<div class="row" style="top:348.5px">
<span class="c" style="left:12px">1.1.5</span>
<span class="c" style="left:88.5px">02010105</span>
<span class="c t" style="left:212px">Đường xã</span>
<span class="c t u" style="left:777.5px">Tuyến/ Đoạn đường</span>
<span class="c t" style="left:1327px">Km</span>
</div>
<div class="row" style="top:387.0px">
<span class="c" style="left:12px">1.1.6</span>
<span class="c" style="left:88.5px">02010106</span>
<span class="c t" style="left:212px">Đường đô thị</span>
<span class="c t u" style="left:777.5px">Tuyến/ Đoạn đường</span>
<span class="c t" style="left:1327px">Km</span>
</div>
<div class="row" style="top:425.5px">
<span class="c" style="left:12px">1.2</span>
<span class="c" style="left:88.5px">020102</span>
<span class="c t" style="left:212px">Tài sản, thiết bị chuyên dùng phục vụ ...</span>
<span class="c t u" style="left:777.5px">Cái</span>
</div>
<div class="row" style="top:464.0px">
<span class="c" style="left:12px">1.2.1</span>
<span class="c" style="left:88.5px">02010201</span>
<span class="c t" style="left:212px">Hệ thống khảo sát tình trạng mặt đườ...</span>
<span class="c t u" style="left:777.5px">Hệ thống</span>
</div>
<div class="row" style="top:502.5px">
<span class="c" style="left:12px">1.2.2</span>
<span class="c" style="left:88.5px">02010202</span>
<span class="c t" style="left:212px">Hệ thống hồ sơ số hóa</span>
<span class="c t u" style="left:777.5px">Hệ thống</span>
</div>
<div class="row" style="top:541.0px">
<span class="c" style="left:12px">2</span>
<span class="c" style="left:88.5px">0202</span>
<span class="c t" style="left:212px">Cầu đường bộ và các công trình phụ t...</span>
</div>
<div class="row" style="top:579.5px">
<span class="c" style="left:12px">2.1</span>
<span class="c" style="left:88.5px">020201</span>
<span class="c t" style="left:212px">Cầu đường bộ và các công trình phụ t...</span>
<span class="c t u" style="left:777.5px">Cái</span>
<span class="c t" style="left:1327px">m2</span>
</div>
<div class="vl bl" style="left:76px;top:118px;height:496px"></div>
<div class="vl bl" style="left:199px;top:118px;height:496px"></div>
<div class="vl bl" style="left:466px;top:118px;height:496px"></div>
<div class="vl bl" style="left:655px;top:118px;height:496px"></div>
<div class="vl bl" style="left:765px;top:118px;height:496px"></div>
<div class="vl bl" style="left:919px;top:118px;height:496px"></div>
<div class="vl bl" style="left:1051px;top:118px;height:496px"></div>
<div class="vl bl" style="left:1183px;top:118px;height:496px"></div>
<div class="vl bl" style="left:1315px;top:118px;height:496px"></div>
<div class="vl bl" style="left:1403px;top:118px;height:496px"></div>
<div id="fix" style="left:1510px">
<div class="fh"></div>
<div class="th" style="left:12px;top:29.9px">Chức năng</div>
<div class="fr sel" style="top:117px"></div>
<div class="fr" style="top:156.0px"></div>
<div class="fr" style="top:194.5px"></div>
<div class="fr" style="top:233.0px"></div>
<div class="fr" style="top:271.5px"></div>
<div class="fr" style="top:310.0px"></div>
<div class="fr" style="top:348.5px"></div>
<div class="fr" style="top:387.0px"></div>
<div class="fr" style="top:425.5px"></div>
<div class="fr" style="top:464.0px"></div>
<div class="fr" style="top:502.5px"></div>
<div class="fr" style="top:541.0px"></div>
<div class="fr" style="top:579.5px"></div>
<svg viewBox="0 0 18 18" style="position:absolute;left:16.3px;top:245.5px;width:17px;height:17px"><path d="M4.700 8.400H4.200a2 2 0 0 0-2 2v3.100a2 2 0 0 0 2 2h9.600a2 2 0 0 0 2-2v-2.700a2.600 2.600 0 0 0-.9-2" fill="none" stroke="#2f54eb" stroke-width="1.400" stroke-linecap="round"/><path d="M13.850 2.300L15.750 4.100 8.850 11.400 6 12.500 6.950 9.600z" fill="none" stroke="#2f54eb" stroke-width="1.300" stroke-linejoin="round"/></svg>
<svg viewBox="0 0 18 18" style="position:absolute;left:51.3px;top:244.5px;width:17px;height:17px"><path d="M1.100 6.200h15.800M5.200 6V4.300a2.700 2.700 0 0 1 2.700-2.700h2.200a2.700 2.700 0 0 1 2.700 2.700V6M3.300 6.400v8.100a2.500 2.500 0 0 0 2.500 2.500h6.400a2.500 2.500 0 0 0 2.500-2.500V6.400M7.250 8.100v5M10.800 8.100v5" fill="none" stroke="#e03c10" stroke-width="1.400" stroke-linecap="round" stroke-linejoin="round"/></svg>
<div id="vthumb" style="left:90px;top:118px"></div>
</div>
<div id="hs"><div></div></div>
<div id="foot">Tổng số: <b>1</b> bản ghi</div>
</div>
<div id="dd">
<svg viewBox="0 0 16 16" style="left:14px;top:9px;width:16px;height:16px"><path d="M8 1v14M1 8h14" stroke="#6b7185" stroke-width="1.300" stroke-linecap="round"/></svg><span style="left:44px;top:7px">Thêm tài sản</span>
<svg viewBox="0 0 20 20" style="left:12px;top:42px;width:20px;height:20px"><path d="M10 2.500v11M5.500 9.500L10 14l4.500-4.500M2 13.500c0 2.800 3 4.500 8 4.500s8-1.700 8-4.500" stroke="#444" stroke-width="1.500" fill="none" stroke-linecap="round" stroke-linejoin="round"/></svg><span style="left:44px;top:42px">Nhập khẩu</span>
<svg viewBox="0 0 20 20" style="left:12px;top:77px;width:20px;height:20px"><path d="M17 8V4.500a2.500 2.500 0 0 0-2.500-2.500h-10A2.500 2.500 0 0 0 2 4.500v10A2.500 2.500 0 0 0 4.500 17H8M5.500 6.500h4M5.500 10h7M11 17h7M16 14.500l2.500 2.500-2.500 2.500" stroke="#333" stroke-width="1.500" fill="none" stroke-linecap="round" stroke-linejoin="round"/></svg><span style="left:40px;top:77px;letter-spacing:-0.200px">Kế thừa dữ liệu năm trước</span>
<div id="red"></div>
</div>
<div id="stab"><svg viewBox="0 0 8 12" style="position:absolute;left:5px;top:43.500px;width:8px;height:12px"><path d="M6.500 1.500L2 6l4.500 4.500" stroke="#fff" stroke-width="1.600" fill="none" stroke-linecap="round" stroke-linejoin="round"/></svg></div>
<div id="rshadow"></div>
</div>
</body>
</html>
